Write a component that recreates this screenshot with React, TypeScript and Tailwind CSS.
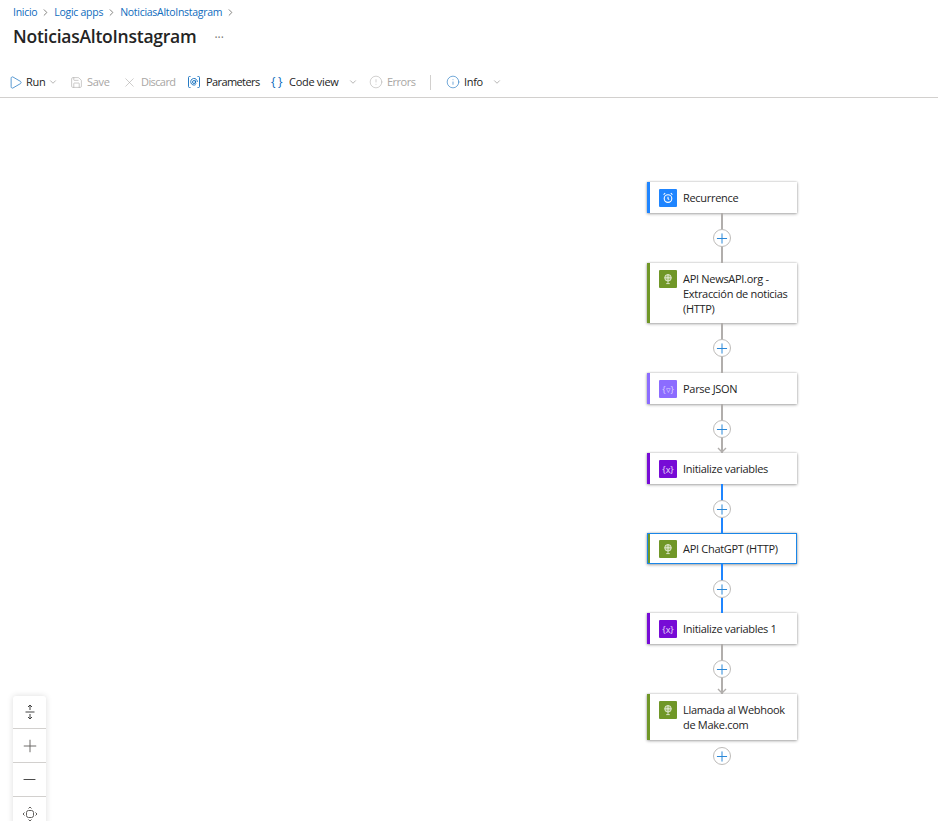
import type { ReactNode } from "react";
import { ChevronDown, ChevronRight, CircleAlert, Info, Minus, Play, Plus, Save, X } from "lucide-react";

type Kind = "timer" | "http" | "parse" | "variable";

interface Step {
  title: string;
  kind: Kind;
  height: string;
  selected?: boolean;
}

const BAR: Record<Kind, string> = {
  timer: "bg-[#1f85ff]",
  http: "bg-[#709727]",
  parse: "bg-[#8c6cff]",
  variable: "bg-[#770bd6]",
};

function TileIcon({ kind }: { kind: Kind }) {
  if (kind === "variable" || kind === "parse") {
    return (
      <span className={`text-[9px] leading-none ${kind === "variable" ? "text-white/85" : "text-white/70"}`}>
        {kind === "variable" ? "{x}" : "{▿}"}
      </span>
    );
  }
  if (kind === "timer") {
    return (
      <svg width="12" height="12" viewBox="0 0 12 12" fill="none" stroke="white" strokeWidth="1.1">
        <circle cx="6" cy="6.6" r="3.8" />
        <path d="M6 4.8v2l1.2.8M1.6 2.6 3.2 1.2M10.4 2.6 8.8 1.2" />
      </svg>
    );
  }
  return (
    <svg width="12" height="12" viewBox="0 0 12 12" fill="none" stroke="white" strokeOpacity="0.75" strokeWidth="0.9">
      <circle cx="6" cy="4.8" r="3.3" fill="white" fillOpacity="0.3" />
      <path d="M2.7 4.8h6.6M6 1.5v6.6M4.2 10.6h3.6M6 8.1v2.5" />
    </svg>
  );
}

function StepCard({ step }: { step: Step }) {
  return (
    <div
      className={`flex w-[150px] shrink-0 bg-white shadow-[0_0_2px_rgba(0,0,0,0.22),0_1px_3px_rgba(0,0,0,0.3)] ${step.height} ${
        step.selected ? "border border-[#1a86e8]" : ""
      }`}
    >
      <div className={`shrink-0 ${step.selected ? "w-[2px]" : "w-[3px]"} ${BAR[step.kind]}`} />
      <div className={`flex min-w-0 flex-1 gap-[6px] pl-[9px] ${step.selected ? "pt-[6px]" : "pt-[7px]"}`}>
        <div className={`flex h-[18px] w-[18px] shrink-0 items-center justify-center rounded-[1px] ${BAR[step.kind]}`}>
          <TileIcon kind={step.kind} />
        </div>
        <p className="pt-[1px] text-[11px] leading-[15px] tracking-[-0.3px] text-[#242424]">{step.title}</p>
      </div>
    </div>
  );
}

function Connector({ height, blue, arrow, last }: { height: string; blue?: boolean; arrow?: boolean; last?: boolean }) {
  return (
    <div className={`relative flex w-[150px] shrink-0 justify-center ${height}`}>
      {!last && <div className={`h-full w-[2px] ${blue ? "bg-[#1f85ff]" : "bg-[#b1aeac]"}`} />}
      <div
        className={`absolute left-[66px] flex h-[18px] w-[18px] items-center justify-center rounded-full border border-[#bdbbb9] bg-white ${
          last ? "top-[7px]" : "top-[16px]"
        }`}
      >
        <Plus size={17} strokeWidth={1.5} className="text-[#2b88d8]" />
      </div>
      {arrow && (
        <svg className="absolute bottom-0 left-[70px]" width="10" height="6" viewBox="0 0 10 6" fill="none" stroke="#b1aeac" strokeWidth="1.4">
          <path d="M1 1l4 4 4-4" />
        </svg>
      )}
    </div>
  );
}

interface ToolProps {
  icon: ReactNode;
  slot: string;
  label: string;
  box: string;
  tracking?: string;
  muted?: boolean;
  chevron?: string;
}

function ToolButton({ icon, slot, label, box, tracking = "tracking-[-0.3px]", muted, chevron }: ToolProps) {
  return (
    <div className={`flex shrink-0 items-center text-[11px] ${box} ${tracking} ${muted ? "text-[#a8a6a4]" : "text-[#242424]"}`}>
      <span className={`flex shrink-0 items-center ${slot}`}>{icon}</span>
      <span>{label}</span>
      {chevron && <ChevronDown size={10} strokeWidth={1.5} className={`text-[#8a8886] ${chevron}`} />}
    </div>
  );
}

export default function App() {
  return (
    <div className="relative h-[821px] overflow-hidden bg-white font-['Open_Sans',sans-serif]">
      {/* Breadcrumb + title */}
      <header className="h-[98px] border-b border-[#d2d0ce]">
        <nav className="flex items-center gap-[3px] pt-[5px] pl-[13px] text-[10.5px] leading-[15px] tracking-[-0.28px] text-[#0f6cbd]">
          <span>Inicio</span>
          <ChevronRight size={11} className="text-[#7a7876]" />
          <span>Logic apps</span>
          <ChevronRight size={11} className="text-[#7a7876]" />
          <span>NoticiasAltoInstagram</span>
          <ChevronRight size={11} className="text-[#7a7876]" />
        </nav>
        <div className="flex h-[28px] items-start pt-[4px] pl-[13px]">
          <h1 className="text-[17.5px] leading-[24px] font-semibold tracking-[-0.25px] text-[#242424]">NoticiasAltoInstagram</h1>
          <span className="ml-[18px] pt-[2px] text-[12px] leading-[24px] text-[#797775]">···</span>
        </div>

        {/* Command bar */}
        <div className="flex items-center pt-[26px] pl-[10px]">
          <ToolButton
            box="w-[60px]"
            slot="w-[16px]"
            icon={<Play size={15} strokeWidth={1.1} className="-ml-[2px] text-[#0f6cbd]" />}
            label="Run"
            chevron="ml-[3px]"
          />
          <ToolButton box="w-[52px]" slot="w-[17px]" muted icon={<Save size={13} strokeWidth={1.1} />} label="Save" />
          <ToolButton box="w-[65px]" slot="w-[19px]" tracking="tracking-[-0.6px]" muted icon={<X size={15} strokeWidth={0.9} />} label="Discard" />
          <ToolButton
            box="w-[84px]"
            slot="w-[19px]"
            tracking="tracking-[-0.6px]"
            icon={
              <svg width="14" height="14" viewBox="0 0 14 14" fill="none" stroke="#0f6cbd" strokeWidth="0.9">
                <path d="M3.5 1.5H2.5q-1 0-1 1v9q0 1 1 1h1M10.5 1.5h1q1 0 1 1v9q0 1-1 1h-1" />
                <circle cx="7" cy="7" r="1.5" />
                <path d="M8.5 5.5v2.2q0 .9.8.6M8.7 9.6A3.3 3.3 0 1 1 10.3 7" />
              </svg>
            }
            label="Parameters"
          />
          <ToolButton
            box="w-[98px]"
            slot="w-[18px]"
            icon={<span className="text-[12px] leading-none text-[#0f6cbd]">{"{ }"}</span>}
            label="Code view"
            chevron="ml-[9px]"
          />
          <ToolButton box="w-[61px]" slot="w-[18px]" tracking="tracking-[-0.5px]" muted icon={<CircleAlert size={14} strokeWidth={0.9} />} label="Errors" />
          <div className="mr-[15px] h-[15px] w-px bg-[#d2d0ce]" />
          <ToolButton box="w-[70px]" slot="w-[18px]" icon={<Info size={14} strokeWidth={1} className="text-[#0f6cbd]" />} label="Info" chevron="ml-[9px]" />
        </div>
      </header>

      {/* Workflow canvas */}
      <main className="flex flex-col items-end pt-[84px] pr-[141px]">
        <StepCard step={{ title: "Recurrence", kind: "timer", height: "h-[31px]" }} />
        <Connector height="h-[50px]" />
        <StepCard step={{ title: "API NewsAPI.org - Extracción de noticias (HTTP)", kind: "http", height: "h-[60px]" }} />
        <Connector height="h-[50px]" />
        <StepCard step={{ title: "Parse JSON", kind: "parse", height: "h-[31px]" }} />
        <Connector height="h-[49px]" arrow />
        <StepCard step={{ title: "Initialize variables", kind: "variable", height: "h-[31px]" }} />
        <Connector height="h-[49px]" blue />
        <StepCard step={{ title: "API ChatGPT (HTTP)", kind: "http", height: "h-[31px]", selected: true }} />
        <Connector height="h-[49px]" blue />
        <StepCard step={{ title: "Initialize variables 1", kind: "variable", height: "h-[31px]" }} />
        <Connector height="h-[50px]" arrow />
        <StepCard step={{ title: "Llamada al Webhook de Make.com", kind: "http", height: "h-[46px]" }} />
        <Connector height="h-[34px]" last />
      </main>

      {/* Zoom controls */}
      <div className="absolute top-[696px] left-[13px] flex w-[33px] flex-col divide-y divide-[#d2d0ce] rounded-[3px] bg-white text-[#605e5c] shadow-[0_0_6px_rgba(0,0,0,0.14)]">
        <div className="flex h-[33px] items-center justify-center">
          <svg width="12" height="16" viewBox="0 0 12 16" fill="none" stroke="#404040" strokeWidth="1">
            <path d="M6 1v5M4 3l2-2 2 2M1.5 8h9M6 15v-5M4 13l2 2 2-2" />
          </svg>
        </div>
        <div className="flex h-[34px] items-center justify-center">
          <Plus size={20} strokeWidth={1.1} />
        </div>
        <div className="flex h-[34px] items-center justify-center">
          <Minus size={19} strokeWidth={1.1} className="text-[#303030]" />
        </div>
        <div className="flex h-[34px] items-center justify-center">
          <svg width="16" height="16" viewBox="0 0 16 16" fill="none" stroke="#605e5c" strokeWidth="1">
            <rect x="4.5" y="4.5" width="7" height="7" rx="2" />
            <path d="M6.5 2.5 8 1l1.5 1.5M6.5 13.5 8 15l1.5-1.5M2.5 6.5 1 8l1.5 1.5M13.5 6.5 15 8l-1.5 1.5" />
          </svg>
        </div>
      </div>
    </div>
  );
}
